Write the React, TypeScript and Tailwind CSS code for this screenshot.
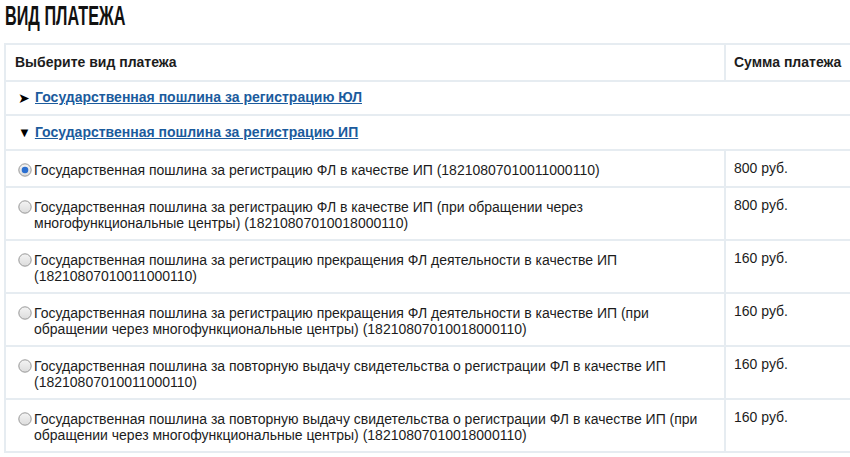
import React from "react";

type Row = { text: string; sum: string; checked?: boolean };

const rows: Row[] = [
  {
    text: "Государственная пошлина за регистрацию ФЛ в качестве ИП (18210807010011000110)",
    sum: "800 руб.",
    checked: true,
  },
  {
    text: "Государственная пошлина за регистрацию ФЛ в качестве ИП (при обращении через многофункциональные центры) (18210807010018000110)",
    sum: "800 руб.",
  },
  {
    text: "Государственная пошлина за регистрацию прекращения ФЛ деятельности в качестве ИП (18210807010011000110)",
    sum: "160 руб.",
  },
  {
    text: "Государственная пошлина за регистрацию прекращения ФЛ деятельности в качестве ИП (при обращении через многофункциональные центры) (18210807010018000110)",
    sum: "160 руб.",
  },
  {
    text: "Государственная пошлина за повторную выдачу свидетельства о регистрации ФЛ в качестве ИП (18210807010011000110)",
    sum: "160 руб.",
  },
  {
    text: "Государственная пошлина за повторную выдачу свидетельства о регистрации ФЛ в качестве ИП (при обращении через многофункциональные центры) (18210807010018000110)",
    sum: "160 руб.",
  },
];

function Radio({ checked }: { checked?: boolean }) {
  return (
    <svg width="14" height="14" viewBox="0 0 14 14" className="shrink-0 mt-[1px]">
      <defs>
        <linearGradient id="rg" x1="0" y1="0" x2="0" y2="1">
          <stop offset="0" stopColor="#f4f4f4" />
          <stop offset="1" stopColor="#dcdcdc" />
        </linearGradient>
      </defs>
      <circle cx="7" cy="7" r="6.2" fill="url(#rg)" stroke="#8d8d8d" strokeWidth="0.9" />
      {checked && <circle cx="7" cy="7" r="3.3" fill="#2b6fd0" />}
    </svg>
  );
}

export default function App() {
  const cell = "border-2 border-[#e6ecf1]";
  return (
    <div className="w-[850px] h-[457px] overflow-hidden bg-white text-[#1c1c1c] font-['Liberation_Sans',Arial,sans-serif] text-[14px]">
      <div className="h-[43px] pl-[5px] pt-[1px]">
        <h1 className="inline-block text-[27px] leading-[30px] font-bold text-[#111] font-['Liberation_Sans',sans-serif] origin-left scale-x-[0.6]">
          ВИД ПЛАТЕЖА
        </h1>
      </div>
      <table className="ml-[4px] w-[870px] border-collapse table-fixed">
        <colgroup>
          <col className="w-[720px]" />
          <col />
        </colgroup>
        <thead>
          <tr className="h-[37px]">
            <th className={`${cell} text-left font-bold px-[9px] align-middle`}>Выберите вид платежа</th>
            <th className={`${cell} text-left font-bold px-[8px] align-middle`}>Сумма платежа</th>
          </tr>
        </thead>
        <tbody>
          <tr className="h-[34px]">
            <td colSpan={2} className={`${cell} px-[12px] align-middle`}>
              <span className="inline-flex items-center gap-[5px]">
                <span className="text-[14px] leading-none text-black">➤</span>
                <a href="#" className="font-bold text-[#1b5b9d] underline">Государственная пошлина за регистрацию ЮЛ</a>
              </span>
            </td>
          </tr>
          <tr className="h-[35px]">
            <td colSpan={2} className={`${cell} px-[12px] align-middle`}>
              <span className="inline-flex items-center gap-[4px]">
                <span className="text-[13px] leading-none text-black">▼</span>
                <a href="#" className="font-bold text-[#1b5b9d] underline">Государственная пошлина за регистрацию ИП</a>
              </span>
            </td>
          </tr>
          {rows.map((r, i) => (
            <tr key={i}>
              <td className={`${cell} align-top pl-[12px] pr-[10px] pt-[11px] pb-[8px]`}>
                <div className="flex gap-[2px] leading-[16px]">
                  <Radio checked={r.checked} />
                  <span>{r.text}</span>
                </div>
              </td>
              <td className={`${cell} align-top px-[8px] pt-[9px] leading-[16px]`}>{r.sum}</td>
            </tr>
          ))}
        </tbody>
      </table>
    </div>
  );
}
